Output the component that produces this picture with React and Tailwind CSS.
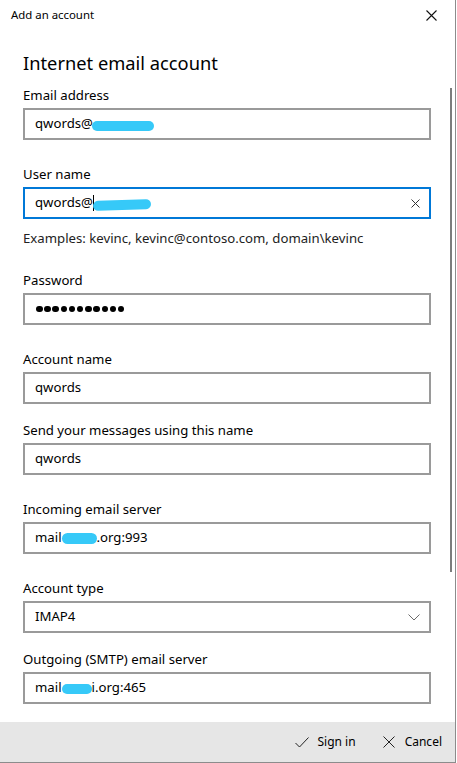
import React from "react";

function Blob({ w, h = 9, className = "" }) {
  return (
    <span
      className={"inline-block rounded-full bg-[#36c9f8] align-middle " + className}
      style={{ width: w, height: h }}
    />
  );
}

function Label({ children, className = "" }) {
  return (
    <div className={"h-[20px] leading-[20px] text-[13.2px] text-black mb-[3px] " + className}>
      {children}
    </div>
  );
}

function Box({ children, focused = false, right = null }) {
  return (
    <div
      className={
        "w-[408px] h-[32px] border-2 flex items-center pl-[10px] pr-[8px] text-[13.2px] text-black " +
        (focused ? "border-[#0078d7]" : "border-[#9a9a9a]")
      }
    >
      <div className="flex-1 flex items-center whitespace-nowrap">{children}</div>
      {right}
    </div>
  );
}

export default function App() {
  return (
    <div className="relative w-[457px] h-[763px] bg-white overflow-hidden font-['Segoe_UI','Noto_Sans',sans-serif]">
      <div className="w-[456px] h-[763px] border-r border-b border-[#8c8c8c] flex flex-col">
        {/* title bar */}
        <div className="h-[30px] flex items-center justify-between pl-[11px] pr-[18px] shrink-0">
          <span className="text-[11.4px] text-black">Add an account</span>
          <svg width="11" height="11" viewBox="0 0 11 11">
            <path d="M0.5 0.5 L10.5 10.5 M10.5 0.5 L0.5 10.5" stroke="#111" strokeWidth="1.1" fill="none" />
          </svg>
        </div>

        {/* content */}
        <div className="flex-1 pl-[23px]">
          <div className="mt-[19px] h-[28px] leading-[28px] text-[18.3px] text-black">Internet email account</div>

          <Label className="mt-[8px]">Email address</Label>
          <Box>
            <span>qwords@</span>
            <Blob w={62} h={10} className="-ml-[1px] translate-y-[2px]" />
          </Box>

          <Label className="mt-[24px]">User name</Label>
          <Box
            focused
            right={
              <svg width="9" height="9" viewBox="0 0 9 9" className="mr-[1px]">
                <path d="M0.5 0.5 L8.5 8.5 M8.5 0.5 L0.5 8.5" stroke="#333" strokeWidth="1" fill="none" />
              </svg>
            }
          >
            <span>qwords@</span>
            <span className="inline-block w-[1px] h-[16px] bg-black" />
            <Blob w={58} h={10} className="-ml-[1px] translate-y-[2px] -rotate-2" />
          </Box>

          <div className="mt-[9px] h-[20px] leading-[20px] text-[13.2px] text-[#222]">
            Examples: kevinc, kevinc@contoso.com, domain\kevinc
          </div>

          <Label className="mt-[22px]">Password</Label>
          <Box>
            <div className="flex items-center gap-[1.7px] pl-[1px]">
              {Array.from({ length: 11 }).map((_, i) => (
                <span key={i} className="w-[6.5px] h-[6.5px] rounded-full bg-black" />
              ))}
            </div>
          </Box>

          <Label className="mt-[24px]">Account name</Label>
          <Box>
            <span>qwords</span>
          </Box>

          <Label className="mt-[16px]">Send your messages using this name</Label>
          <Box>
            <span>qwords</span>
          </Box>

          <Label className="mt-[24px]">Incoming email server</Label>
          <Box>
            <span>mail</span>
            <Blob w={35} h={11} className="translate-y-[1px]" />
            <span>.org:993</span>
          </Box>

          <Label className="mt-[24px]">Account type</Label>
          <Box
            right={
              <svg width="12" height="7" viewBox="0 0 12 7" className="mr-[1px]">
                <path d="M0.5 0.5 L6 6 L11.5 0.5" stroke="#6b6b6b" strokeWidth="1" fill="none" />
              </svg>
            }
          >
            <span>IMAP4</span>
          </Box>

          <Label className="mt-[16px]">Outgoing (SMTP) email server</Label>
          <Box>
            <span>mail</span>
            <Blob w={30} h={10} className="translate-y-[1px]" />
            <span>i.org:465</span>
          </Box>
        </div>

        {/* footer */}
        <div className="h-[40px] shrink-0 bg-[#e6e6e6] flex items-center justify-end pr-[13px] text-[12px] text-black">
          <div className="flex items-center">
            <svg width="14" height="11" viewBox="0 0 14 11">
              <path d="M0.5 6 L4.5 10 L13.5 0.5" stroke="#222" strokeWidth="1" fill="none" />
            </svg>
            <span className="ml-[9px]">Sign in</span>
          </div>
          <div className="flex items-center ml-[27px]">
            <svg width="12" height="12" viewBox="0 0 12 12">
              <path d="M0.5 0.5 L11.5 11.5 M11.5 0.5 L0.5 11.5" stroke="#222" strokeWidth="1" fill="none" />
            </svg>
            <span className="ml-[10px]">Cancel</span>
          </div>
        </div>
      </div>

      {/* scroll indicator */}
      <div className="absolute left-[450px] top-[88px] w-[2px] h-[484px] bg-[#7d7d7d]" />
    </div>
  );
}
